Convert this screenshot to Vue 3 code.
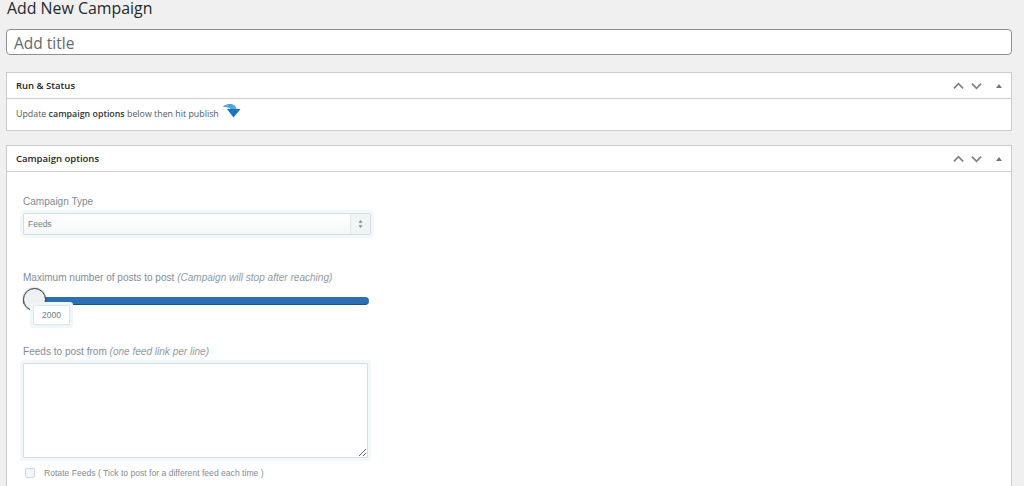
<script setup>
const maxPosts = 2000;
</script>

<template>
  <main class="page">
    <h1 class="title">Add New Campaign</h1>
    <input class="title-input" type="text" placeholder="Add title" />

    <section class="panel first">
      <header class="panel-head">
        <h2>Run &amp; Status</h2>
        <div class="handles">
          <svg viewBox="0 0 12 8" class="chev"><path d="M1 6.5 6 1.5l5 5" /></svg>
          <svg viewBox="0 0 12 8" class="chev"><path d="M1 1.5l5 5 5-5" /></svg>
          <span class="tri"></span>
        </div>
      </header>
      <div class="status-body">
        <span>Update <b>campaign options</b> below then hit publish</span>
        <svg class="arrow" viewBox="0 0 20 15">
          <path d="M1 2.8C4-.3 9-.6 12.5 1.5L14.5 5H18.5L11.5 13.5 5 5H9C7 3.2 4 2.3 1 2.8Z" fill="#1a74c0" />
          <path d="M1 2.8C4-.3 9-.6 12.5 1.5L14.5 5H9C7 3.2 4 2.3 1 2.8Z" fill="#4fa6e4" />
        </svg>
      </div>
    </section>

    <section class="panel second">
      <header class="panel-head">
        <h2>Campaign options</h2>
        <div class="handles">
          <svg viewBox="0 0 12 8" class="chev"><path d="M1 6.5 6 1.5l5 5" /></svg>
          <svg viewBox="0 0 12 8" class="chev"><path d="M1 1.5l5 5 5-5" /></svg>
          <span class="tri"></span>
        </div>
      </header>
      <div class="options">
        <label class="lbl type-lbl">Campaign Type</label>
        <div class="select">
          <span class="select-val">Feeds</span>
          <span class="select-btn">
            <svg viewBox="0 0 6 10"><path d="M3 0 5.5 3.5H.5ZM3 10 .5 6.5h5Z" fill="#7a8a94" /></svg>
          </span>
        </div>

        <label class="lbl max-lbl">Maximum number of posts to post <i>(Campaign will stop after reaching)</i></label>
        <div class="slider">
          <div class="track"></div>
          <div class="knob"></div>
          <div class="tip">{{ maxPosts }}</div>
        </div>

        <label class="lbl feeds-lbl">Feeds to post from <i>(one feed link per line)</i></label>
        <textarea class="feeds"></textarea>

        <div class="rotate">
          <span class="check"></span>
          <span>Rotate Feeds ( Tick to post for a different feed each time )</span>
        </div>
      </div>
    </section>
  </main>
</template>

<style>
html, body { margin: 0; background: #f0f0f1; overflow: hidden; }
</style>

<style scoped>
.page {
  height: 486px;
  overflow: hidden;
  box-sizing: border-box;
  padding: 0 12px 0 6px;
  background: #f0f0f1;
  font-family: "Open Sans", sans-serif;
  color: #1d2327;
}
.title {
  margin: 0;
  height: 29px;
  padding-left: 1px;
  font-size: 15.9px;
  line-height: 17px;
  font-weight: 400;
  color: #23282d;
}
.title-input {
  display: block;
  box-sizing: border-box;
  width: 100%;
  height: 26px;
  margin: 0;
  padding: 1px 7px 0;
  border: 1px solid #8c8f94;
  border-radius: 4px;
  background: #fff;
  font-family: inherit;
  font-size: 15.5px;
  outline: none;
}
.title-input::placeholder { color: #646970; opacity: 1; }
.panel {
  background: #fff;
  border: 1px solid #c9cccf;
  box-sizing: border-box;
}
.first { margin-top: 17px; height: 59px; }
.second { margin-top: 14px; height: 360px; }
.panel-head {
  height: 26px;
  box-sizing: border-box;
  border-bottom: 1px solid #c9cccf;
  display: flex;
  align-items: center;
  justify-content: space-between;
  padding: 0 9px;
}
.panel-head h2 {
  margin: 0;
  font-size: 9.5px;
  line-height: 1;
  font-weight: 600;
  color: #1d2327;
}
.handles { display: flex; align-items: center; }
.chev {
  width: 11px;
  height: 8px;
  margin-right: 7px;
  fill: none;
  stroke: #7a8187;
  stroke-width: 1.9;
}
.chev + .chev { margin-right: 0; }
.tri {
  width: 0;
  height: 0;
  margin: 0 0 0 14px;
  border-left: 3.5px solid transparent;
  border-right: 3.5px solid transparent;
  border-bottom: 4px solid #6f767c;
}
.status-body {
  display: flex;
  align-items: flex-start;
  padding: 3px 9px 0;
  font-size: 8.85px;
  line-height: 24px;
  color: #50575e;
  height: 31px;
  box-sizing: border-box;
}
.status-body b { font-weight: 600; color: #2c3338; }
.arrow { width: 20px; height: 15px; margin: 2px 0 0 3px; }
.options {
  display: flex;
  flex-direction: column;
  align-items: flex-start;
  padding-left: 16px;
  font-family: "Liberation Sans", Arial, sans-serif;
}
.lbl {
  font-size: 10.06px;
  line-height: 14px;
  color: #7f8c96;
}
.lbl i { color: #8e9aa3; }
.type-lbl { margin-top: 23px; }
.select {
  margin-top: 4px;
  width: 348px;
  height: 22px;
  box-sizing: border-box;
  border: 1px solid #cfdfe5;
  border-radius: 2px;
  box-shadow: 0 0 0 3px #f2f7fa;
  background: linear-gradient(#fff, #f6f8f8);
  display: flex;
  align-items: center;
  justify-content: space-between;
  font-size: 8.5px;
  color: #70808a;
}
.select-val { padding-left: 4px; }
.select-btn {
  width: 20px;
  height: 100%;
  box-sizing: border-box;
  border-left: 1px solid #dfe7ea;
  background: #f1f4f4;
  display: flex;
  align-items: center;
  justify-content: center;
}
.select-btn svg { width: 5px; height: 8px; }
.max-lbl { margin-top: 36px; }
.slider {
  position: relative;
  margin-top: 3px;
  width: 346px;
  height: 30px;
}
.track {
  position: absolute;
  left: 0;
  right: 0;
  top: 9px;
  height: 8px;
  border-radius: 4px;
  background: #2c6fb3;
  border-bottom: 1px solid #1f4f80;
  box-sizing: border-box;
}
.knob {
  position: absolute;
  left: 0;
  top: 0;
  width: 23px;
  height: 23px;
  box-sizing: border-box;
  border-radius: 50%;
  background: #eef0f4;
  border: 1.5px solid #3c4247;
  box-shadow: 0 0 2px rgba(0, 0, 0, 0.35);
}
.tip {
  position: absolute;
  left: 10px;
  top: 17px;
  width: 37px;
  height: 20px;
  box-sizing: border-box;
  background: #fff;
  border: 1px solid #d9e6ea;
  box-shadow: 0 0 0 3px #eff6f9;
  border-radius: 1px;
  font-size: 8.5px;
  line-height: 18px;
  text-align: center;
  color: #6d7b85;
}
.feeds-lbl { margin-top: 27px; }
.feeds {
  display: block;
  margin: 4px 0 0;
  width: 345px;
  height: 95px;
  box-sizing: border-box;
  border: 1px solid #cfdfe5;
  border-radius: 1px;
  box-shadow: 0 0 0 3px #f2f7fa;
  background: #fff;
  outline: none;
}
.rotate {
  display: flex;
  align-items: center;
  margin: 7px 0 0 2px;
  font-size: 8.6px;
  line-height: 16px;
  color: #7f8c96;
}
.check {
  width: 8px;
  height: 8px;
  margin-right: 9px;
  border: 1px solid #c6dbe5;
  border-radius: 2px;
  background: #f3f7f9;
}
</style>
